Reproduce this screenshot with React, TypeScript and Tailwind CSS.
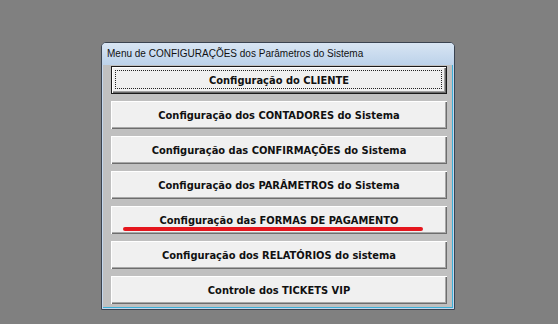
import React from "react";

const items = [
  "Configuração do CLIENTE",
  "Configuração dos CONTADORES do Sistema",
  "Configuração das CONFIRMAÇÕES do Sistema",
  "Configuração dos PARÂMETROS do Sistema",
  "Configuração das FORMAS DE PAGAMENTO",
  "Configuração dos RELATÓRIOS do sistema",
  "Controle dos TICKETS VIP",
];

function Btn({ label, index }: { label: string; index: number }) {
  const isDefault = index === 0;
  const underline = index === 4;
  return (
    <div
      className={
        "relative h-[28px] w-[336px] flex items-center justify-center bg-[#f0f0f0] " +
        (isDefault
          ? "border border-[#1a1a1a] shadow-[inset_1px_1px_0_#ffffff,inset_-1px_-1px_0_#696969,inset_-2px_-2px_0_#a0a0a0]"
          : "shadow-[inset_1px_1px_0_#ffffff,inset_-1px_-1px_0_#6d6d6d,inset_-2px_-2px_0_#a8a8a8]")
      }
    >
      {isDefault && (
        <div className="absolute left-[3px] right-[4px] top-[3px] bottom-[4px] border border-dotted border-[#222]" />
      )}
      <span
        className="relative text-[11px] font-bold text-[#111] leading-none whitespace-nowrap"
        style={{ fontFamily: "Tahoma, 'DejaVu Sans Condensed', 'Liberation Sans', sans-serif" }}
      >
        {label}
      </span>
      {underline && (
        <div className="absolute left-[12px] top-[21px] w-[300px] h-[4px] rounded-full bg-[#e5161d]" />
      )}
    </div>
  );
}

export default function App() {
  return (
    <div className="w-[558px] h-[324px] bg-[#808080] pt-[42px] pl-[101px] overflow-hidden">
      <div className="w-[354px] h-[268px] border border-[#3a4350] rounded-t-[5px] bg-[#c4d7ed] flex flex-col overflow-hidden">
        <div className="h-[22px] shrink-0 bg-gradient-to-b from-[#d8e5f3] to-[#bcd2ea] flex items-center pl-[5px]">
          <span
            className="text-[10px] text-[#111] leading-none whitespace-nowrap"
            style={{ fontFamily: "'Liberation Sans', Arial, sans-serif" }}
          >
            Menu de CONFIGURAÇÕES dos Parâmetros do Sistema
          </span>
        </div>
        <div className="flex-1 ml-[1px] mr-[1px] mb-[1px] border-r border-b border-[#3cb0d8] bg-[#c0c0c0] pl-[8px] pt-[1px] flex flex-col gap-[7px]">
          {items.map((t, i) => (
            <Btn key={t} label={t} index={i} />
          ))}
        </div>
      </div>
    </div>
  );
}
